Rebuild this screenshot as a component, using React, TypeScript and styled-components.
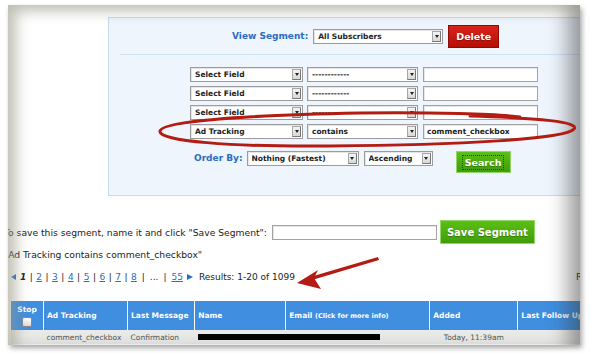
import React from "react";
import styled, { createGlobalStyle } from "styled-components";

const GlobalStyle = createGlobalStyle`
  html, body { margin: 0; padding: 0; background: #fff; }
  body { font-family: "DejaVu Sans", Verdana, sans-serif; }
`;

const Frame = styled.div`
  position: relative;
  width: 590px;
  height: 355px;
  padding: 5px 10px 10px 8px;
  box-sizing: border-box;
  background: #fff;
  overflow: hidden;
`;

const Paper = styled.div`
  position: relative;
  width: 572px;
  height: 340px;
  overflow: hidden;
  background: #fff;
  box-shadow: 2px 3px 5px rgba(0, 0, 0, 0.35);

  &::after {
    content: "";
    position: absolute;
    inset: 0;
    pointer-events: none;
    box-shadow: inset 14px 12px 14px -6px rgba(150, 150, 130, 0.6),
      inset -24px -4px 20px -12px rgba(60, 60, 60, 0.5);
  }
`;

const Sheet = styled.div`
  margin-left: -4px;
  padding-top: 12px;
  font-size: 9.2px;
  color: #222;
`;

const Panel = styled.div`
  margin-left: 104px;
  width: 520px;
  height: 177px;
  background: #eef5fd;
  border: 1px solid #c5dbf2;
  border-right: none;
`;

const PanelHeader = styled.div`
  height: 36px;
  display: flex;
  align-items: center;
  padding-left: 123px;
`;

const BlueLabel = styled.span`
  color: #2b6dbf;
  font-weight: bold;
  font-size: 9px;
  margin-right: 5px;
`;

const Divider = styled.div`
  margin-left: 11px;
  border-top: 1px solid #d2e2f3;
`;

const Criteria = styled.div`
  padding: 12px 0 0 81px;
  display: flex;
  flex-direction: column;
  gap: 4px;
`;

const Row = styled.div`
  display: flex;
  align-items: center;
  gap: 4px;
`;

const SelectBox = styled.div<{ $w: number }>`
  width: ${(p) => p.$w}px;
  height: 15px;
  box-sizing: border-box;
  border: 1px solid #9b9b9b;
  background: #fff;
  display: flex;
  align-items: center;
  padding-left: 4px;
  font-size: 7.5px;
  font-weight: bold;
  color: #222;
  white-space: nowrap;
  box-shadow: inset 1px 1px 0 #e6e6e6;
`;

const SelectText = styled.span`
  flex: 1;
  overflow: hidden;
`;

const Arrow = styled.span`
  width: 9px;
  height: 11px;
  margin-right: 1px;
  background: linear-gradient(#f4f4f4, #d8d8d8);
  border: 1px solid #a8a8a8;
  border-right-color: #777;
  border-bottom-color: #777;
  box-sizing: border-box;
  display: flex;
  align-items: center;
  justify-content: center;
  &::before {
    content: "";
    border-left: 2px solid transparent;
    border-right: 2px solid transparent;
    border-top: 3px solid #222;
  }
`;

const TextInput = styled.div<{ $w: number }>`
  width: ${(p) => p.$w}px;
  height: 15px;
  box-sizing: border-box;
  border: 1px solid #a3a3a3;
  background: #fff;
  font-size: 7.5px;
  font-weight: bold;
  padding-left: 3px;
  display: flex;
  align-items: center;
  box-shadow: inset 1px 1px 0 #e6e6e6;
`;

const Button = styled.div<{ $tone: "red" | "green"; $w: number; $h: number }>`
  width: ${(p) => p.$w}px;
  height: ${(p) => p.$h}px;
  box-sizing: border-box;
  display: flex;
  align-items: center;
  justify-content: center;
  color: #fff;
  font-weight: bold;
  font-size: 9.5px;
  text-shadow: 0 1px 1px rgba(0, 0, 0, 0.3);
  background: ${(p) =>
    p.$tone === "red"
      ? "linear-gradient(#d8231a, #b50f08)"
      : "linear-gradient(#5cbf14, #3f9d08)"};
  border: 1px solid ${(p) => (p.$tone === "red" ? "#8e0c06" : "#93d66a")};
`;

const FocusRing = styled.span`
  outline: 1px dotted #1d4d0a;
  padding: 1px 2px;
`;

const OrderRow = styled.div`
  display: flex;
  align-items: flex-start;
  margin: 12px 0 0 85px;
`;

const OrderLabel = styled(BlueLabel)`
  line-height: 15px;
  margin-right: 4px;
`;

const Below = styled.div`
  display: flex;
  flex-direction: column;
`;

const SaveRow = styled.div`
  margin-top: 24px;
  height: 24px;
  display: flex;
  align-items: center;
`;

const Line = styled.div<{ $mt: number }>`
  margin-top: ${(p) => p.$mt}px;
  height: 12px;
  line-height: 12px;
  white-space: nowrap;
  display: flex;
  align-items: center;
`;

const Pager = styled(Line)`
  font-size: 9px;
`;

const PageLink = styled.a`
  color: #2b6dbf;
  text-decoration: underline;
`;

const Sep = styled.span<{ $wide?: boolean }>`
  margin: ${(p) => (p.$wide ? "0 5px" : "0 3.5px")};
`;

const Tri = styled.span<{ $dir: "l" | "r" }>`
  width: 0;
  height: 0;
  border-top: 3.5px solid transparent;
  border-bottom: 3.5px solid transparent;
  ${(p) =>
    p.$dir === "l"
      ? "border-right: 5px solid #2b6dbf; margin: 0 4px 0 7px;"
      : "border-left: 6px solid #2b6dbf; margin: 0 6px 0 4px;"}
`;

const Table = styled.table`
  margin-top: 18px;
  margin-left: 6px;
  border-collapse: collapse;
  table-layout: fixed;
  width: 620px;
`;

const Th = styled.th<{ $w: number }>`
  width: ${(p) => p.$w}px;
  height: 29px;
  background: #3f8ee0;
  color: #fff;
  font-size: 7.5px;
  font-weight: bold;
  text-align: left;
  padding: 0 3px;
  border-left: 1px solid #fff;
  white-space: nowrap;
  overflow: hidden;
  box-sizing: border-box;
`;

const StopTh = styled(Th)`
  text-align: center;
  vertical-align: top;
  padding-top: 4px;
`;

const Check = styled.div`
  width: 8px;
  height: 8px;
  margin: 3px auto 0;
  background: linear-gradient(#fff, #ddd);
  border: 1px solid #888;
  border-radius: 2px;
`;

const Small = styled.span`
  font-size: 6.5px;
`;

const Td = styled.td<{ $center?: boolean }>`
  height: 14px;
  background: #ebebe9;
  color: #555;
  font-size: 7.5px;
  padding: 0 3px;
  text-align: ${(p) => (p.$center ? "center" : "left")};
  white-space: nowrap;
  overflow: hidden;
`;

const Redact = styled.span<{ $w: number }>`
  display: inline-block;
  width: ${(p) => p.$w}px;
  height: 6px;
  background: #000;
  vertical-align: middle;
`;

const Notes = styled.svg`
  position: absolute;
  left: 0;
  top: 0;
  pointer-events: none;
`;

const Select = ({ w, text }: { w: number; text: string }) => (
  <SelectBox $w={w}>
    <SelectText>{text}</SelectText>
    <Arrow />
  </SelectBox>
);

const rows = [
  ["Select Field", "------------", ""],
  ["Select Field", "------------", ""],
  ["Select Field", "------------", ""],
  ["Ad Tracking", "contains", "comment_checkbox"],
];

export default function App() {
  return (
    <>
      <GlobalStyle />
      <Frame>
        <Paper>
          <Sheet>
            <Panel>
              <PanelHeader>
                <BlueLabel>View Segment:</BlueLabel>
                <Select w={130} text="All Subscribers" />
                <Button $tone="red" $w={51} $h={23} style={{ marginLeft: 5 }}>
                  Delete
                </Button>
              </PanelHeader>
              <Divider />
              <Criteria>
                {rows.map((r, i) => (
                  <Row key={i}>
                    <Select w={113} text={r[0]} />
                    <Select w={111} text={r[1]} />
                    <TextInput $w={115} style={{ marginLeft: 1 }}>
                      {r[2]}
                    </TextInput>
                  </Row>
                ))}
              </Criteria>
              <OrderRow>
                <OrderLabel>Order By:</OrderLabel>
                <Select w={112} text="Nothing (Fastest)" />
                <span style={{ width: 5 }} />
                <Select w={69} text="Ascending" />
                <span style={{ width: 23 }} />
                <Button $tone="green" $w={55} $h={22}>
                  <FocusRing>Search</FocusRing>
                </Button>
              </OrderRow>
            </Panel>
            <Below>
              <SaveRow>
                <span>To save this segment, name it and click "Save Segment":</span>
                <TextInput $w={165} style={{ marginLeft: 5 }} />
                <Button $tone="green" $w={95} $h={24} style={{ marginLeft: 3, fontSize: 10 }}>
                  Save Segment
                </Button>
              </SaveRow>
              <Line $mt={5}>"Ad Tracking contains comment_checkbox"</Line>
              <Pager $mt={10}>
                <Tri $dir="l" />
                <b>
                  <i>1</i>
                </b>
                {["2", "3", "4", "5", "6", "7", "8"].map((n) => (
                  <React.Fragment key={n}>
                    <Sep>|</Sep>
                    <PageLink>{n}</PageLink>
                  </React.Fragment>
                ))}
                <Sep $wide>|</Sep>
                ...
                <Sep $wide>|</Sep>
                <PageLink>55</PageLink>
                <Tri $dir="r" />
                Results: 1-20 of 1099
                <span style={{ marginLeft: 281 }}>R</span>
              </Pager>
              <Table>
                <thead>
                  <tr>
                    <StopTh $w={33}>
                      Stop
                      <Check />
                    </StopTh>
                    <Th $w={84}>Ad Tracking</Th>
                    <Th $w={67}>Last Message</Th>
                    <Th $w={91}>Name</Th>
                    <Th $w={144}>
                      Email <Small>(Click for more info)</Small>
                    </Th>
                    <Th $w={88}>Added</Th>
                    <Th $w={112}>Last Follow Up</Th>
                  </tr>
                </thead>
                <tbody>
                  <tr>
                    <Td />
                    <Td>comment_checkbox</Td>
                    <Td>Confirmation</Td>
                    <Td style={{ paddingRight: 0 }}>
                      <Redact $w={90} />
                    </Td>
                    <Td style={{ paddingLeft: 0 }}>
                      <Redact $w={94} />
                    </Td>
                    <Td $center>Today, 11:39am</Td>
                    <Td />
                  </tr>
                </tbody>
              </Table>
            </Below>
          </Sheet>
        </Paper>
        <Notes width="590" height="355" viewBox="0 0 590 355">
          <g fill="none" stroke="#b31c12" strokeLinecap="round">
            <path
              d="M 470 116 C 540 118 580 122 574 129 C 566 139 460 145 330 146 C 230 147 158 141 160 131 C 162 121 250 115 360 113 C 430 112 500 114 520 117"
              strokeWidth="3"
            />
          </g>
          <g fill="#b31c12">
            <polygon points="378,257 379,260 312,280 310,277" />
            <polygon points="297,283 318,270 314,278 321,289" />
          </g>
        </Notes>
      </Frame>
    </>
  );
}
